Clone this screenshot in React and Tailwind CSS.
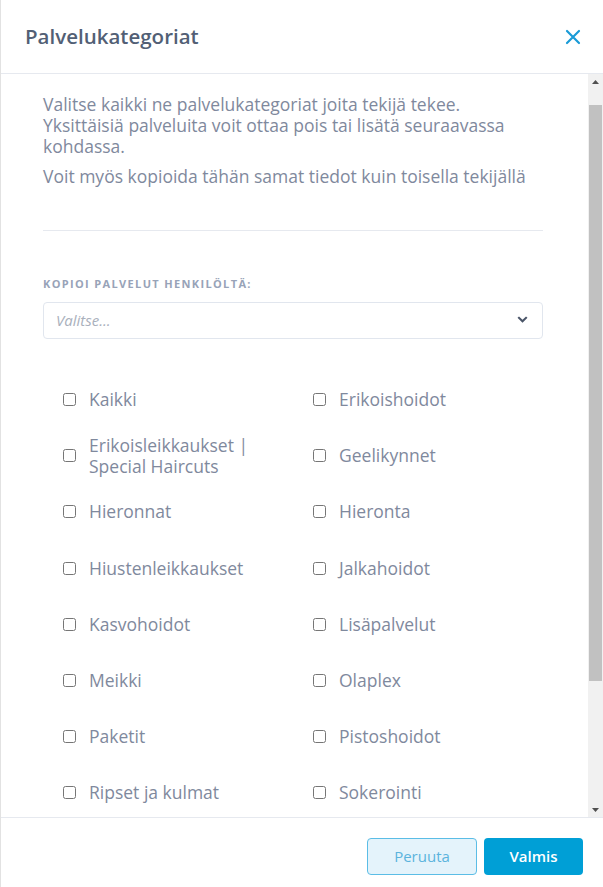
import React from 'react';

const categories = [
  ['Kaikki', 'Erikoishoidot'],
  ['Erikoisleikkaukset | Special Haircuts', 'Geelikynnet'],
  ['Hieronnat', 'Hieronta'],
  ['Hiustenleikkaukset', 'Jalkahoidot'],
  ['Kasvohoidot', 'Lisäpalvelut'],
  ['Meikki', 'Olaplex'],
  ['Paketit', 'Pistoshoidot'],
  ['Ripset ja kulmat', 'Sokerointi'],
];

const CategoryCheck = ({ label }) => (
  <label className="flex items-center gap-[13px] min-h-[56.2px] pl-5 pr-3 cursor-pointer">
    <input type="checkbox" className="w-[13px] h-[13px] shrink-0 m-0" />
    <span className="text-[17.5px] leading-[21px] text-[#7f899d]">{label}</span>
  </label>
);

const App = () => {
  return (
    <div
      className="h-[887px] w-[603px] flex flex-col bg-white border-l border-[#e2e2e2] overflow-hidden"
      style={{ fontFamily: '"Open Sans", "Noto Sans", sans-serif' }}
    >
      <div className="h-[74px] shrink-0 flex items-center justify-between pl-6 pr-[22px] border-b border-[#e6e9ef]">
        <h2 className="text-[20.5px] font-semibold text-[#525f75]">Palvelukategoriat</h2>
        <button className="text-[#1a9bd7]">
          <svg width="16" height="16" viewBox="0 0 16 16" fill="none" stroke="currentColor" strokeWidth="2.2" strokeLinecap="round">
            <path d="M2 2 L14 14 M14 2 L2 14" />
          </svg>
        </button>
      </div>

      <div className="flex-1 min-h-0 flex">
        <div className="flex-1 overflow-hidden">
          <div className="pl-[42px] pr-[45px] pt-[20px]">
            <p className="text-[17.5px] leading-[21px] text-[#7f899d]">
              Valitse kaikki ne palvelukategoriat joita tekijä tekee. Yksittäisiä palveluita voit ottaa pois tai lisätä seuraavassa kohdassa.
            </p>
            <p className="mt-[9px] text-[17.5px] leading-[21px] text-[#7f899d]">
              Voit myös kopioida tähän samat tiedot kuin toisella tekijällä
            </p>
            <div className="mt-[43px] border-t border-[#e6e9ef]" />
            <div className="mt-[45px] text-[11px] font-bold tracking-[1.35px] text-[#98a3b8] uppercase">
              Kopioi palvelut henkilöltä:
            </div>
            <div className="mt-[9px] h-[37px] rounded-[4px] border border-[#e1e6ee] flex items-center justify-between pl-3 pr-[14px]">
              <span className="italic text-[15px] text-[#a9b0bc]">Valitse...</span>
              <svg width="11" height="8" viewBox="0 0 11 8" fill="#4a5568">
                <path d="M0.5 1.8 L2 0.5 L5.5 3.8 L9 0.5 L10.5 1.8 L5.5 6.7 Z" />
              </svg>
            </div>
            <div className="mt-[33px] grid grid-cols-2">
              {categories.map(([a, b]) => (
                <React.Fragment key={a}>
                  <CategoryCheck label={a} />
                  <CategoryCheck label={b} />
                </React.Fragment>
              ))}
            </div>
          </div>
        </div>

        <div className="w-[15px] shrink-0 bg-[#f1f1f1] flex flex-col items-center">
          <div className="h-[15px] w-full flex items-center justify-center">
            <svg width="7" height="4" viewBox="0 0 7 4" fill="#505050"><path d="M0 4 L3.5 0 L7 4 Z" /></svg>
          </div>
          <div className="mt-[16px] h-[576px] w-[13px] bg-[#c1c1c1]" />
          <div className="flex-1" />
          <div className="h-[15px] w-full flex items-center justify-center">
            <svg width="7" height="4" viewBox="0 0 7 4" fill="#505050"><path d="M0 0 L3.5 4 L7 0 Z" /></svg>
          </div>
        </div>
      </div>

      <div className="h-[70px] shrink-0 border-t border-[#e6e9ef] flex items-start justify-end gap-[7px] pr-5 pt-[20px]">
        <button className="h-[37px] w-[110px] rounded-[4px] border border-[#5bbde6] bg-[#e4f3fb] text-[15px] text-[#5bb3dd]">
          Peruuta
        </button>
        <button className="h-[37px] w-[99px] rounded-[4px] bg-[#009fd6] text-[15px] font-semibold text-white">
          Valmis
        </button>
      </div>
    </div>
  );
};

export default App;
